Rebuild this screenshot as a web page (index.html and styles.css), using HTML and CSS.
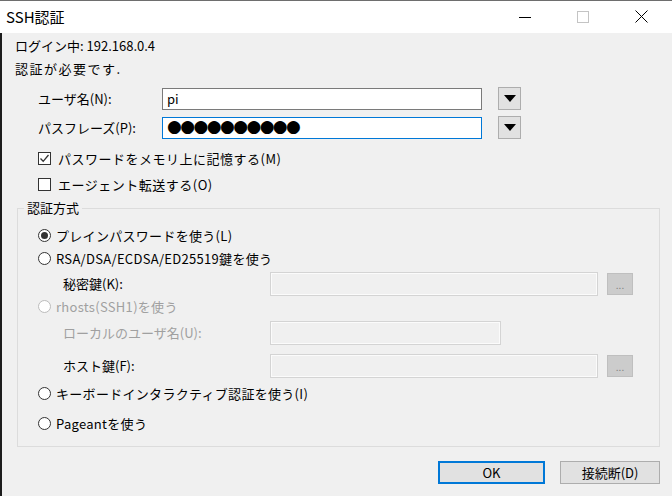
FILE: index.html
```html
<!DOCTYPE html>
<html lang="ja">
<head>
    <meta charset="UTF-8">
    <title>SSH認証</title>
    <link rel="stylesheet" href="styles.css">
</head>
<body>
    <div class="window">
        <div class="titlebar">
            <span class="title">SSH認証</span>
            <div class="caption">
                <span class="cap-btn"><svg width="12" height="12" viewBox="0 0 12 12"><path d="M0 6.5H12" stroke="#000" stroke-width="1"/></svg></span>
                <span class="cap-btn"><svg width="12" height="12" viewBox="0 0 12 12"><rect x="0.5" y="0.5" width="11" height="11" fill="none" stroke="#c4c4c4" stroke-width="1"/></svg></span>
                <span class="cap-btn"><svg width="13" height="13" viewBox="0 0 13 13"><path d="M0.5 0.5L12.5 12.5M12.5 0.5L0.5 12.5" stroke="#000" stroke-width="1"/></svg></span>
            </div>
        </div>

        <div class="client">
            <div class="info first">ログイン中: 192.168.0.4</div>
            <div class="info wide-text">認証が必要です.</div>

            <div class="field-row user">
                <label class="field-label">ユーザ名(N):</label>
                <div class="textbox">pi</div>
                <span class="drop"><svg width="12" height="7" viewBox="0 0 12 7"><path d="M0 0H12L6 7Z" fill="#000"/></svg></span>
            </div>
            <div class="field-row pass">
                <label class="field-label">パスフレーズ(P):</label>
                <div class="textbox focused"><span class="dots">●●●●●●●●●●</span></div>
                <span class="drop"><svg width="12" height="7" viewBox="0 0 12 7"><path d="M0 0H12L6 7Z" fill="#000"/></svg></span>
            </div>

            <div class="check-row first">
                <span class="checkbox"><svg width="11" height="11" viewBox="0 0 11 11"><path d="M1.5 5.5L4.2 8.3L9.5 2" fill="none" stroke="#333" stroke-width="1.3"/></svg></span>
                <span>パスワードをメモリ上に記憶する(M)</span>
            </div>
            <div class="check-row">
                <span class="checkbox"></span>
                <span>エージェント転送する(O)</span>
            </div>

            <fieldset class="auth">
                <legend>認証方式</legend>
                <div class="radio-row r1"><span class="radio checked"></span><span>プレインパスワードを使う(L)</span></div>
                <div class="radio-row r2"><span class="radio"></span><span>RSA/DSA/ECDSA/ED25519鍵を使う</span></div>
                <div class="sub-row key">
                    <span class="sub-label">秘密鍵(K):</span>
                    <div class="textbox disabled wide"></div>
                    <span class="browse">...</span>
                </div>
                <div class="radio-row r3 disabled"><span class="radio"></span><span>rhosts(SSH1)を使う</span></div>
                <div class="sub-row local disabled">
                    <span class="sub-label">ローカルのユーザ名(U):</span>
                    <div class="textbox disabled narrow"></div>
                </div>
                <div class="sub-row host">
                    <span class="sub-label">ホスト鍵(F):</span>
                    <div class="textbox disabled wide"></div>
                    <span class="browse">...</span>
                </div>
                <div class="radio-row r4"><span class="radio"></span><span>キーボードインタラクティブ認証を使う(I)</span></div>
                <div class="radio-row r5"><span class="radio"></span><span>Pageantを使う</span></div>
            </fieldset>

            <div class="buttons">
                <button class="btn default">OK</button>
                <button class="btn">接続断(D)</button>
            </div>
        </div>
    </div>
</body>
</html>
```

FILE: styles.css
```css
html, body {
    margin: 0;
    padding: 0;
}
body {
    width: 672px;
    height: 496px;
    overflow: hidden;
    font-family: 'Noto Sans CJK JP', 'Noto Sans', sans-serif;
    font-size: 13px;
    color: #000;
    background: #f0f0f0;
}
.window {
    width: 672px;
    height: 496px;
    display: flex;
    flex-direction: column;
}
.titlebar {
    height: 32px;
    border-top: 1px solid #6e6e6e;
    background: #fff;
    display: flex;
    align-items: center;
    justify-content: space-between;
}
.title {
    font-size: 15px;
    line-height: 20px;
    padding-left: 6px;
    margin-top: -1px;
}
.caption {
    display: flex;
    padding-right: 2px;
    height: 32px;
}
.cap-btn {
    width: 58px;
    display: flex;
    align-items: center;
    justify-content: center;
    margin-top: -1px;
}
.client {
    flex: 1;
    border-left: 2px solid #1c1c1c;
    background: #f0f0f0;
}
.info {
    height: 23px;
    line-height: 23px;
    padding-left: 13px;
}
.info.first {
    margin-top: 1px;
}
.info.wide-text {
    letter-spacing: 1.5px;
}
.field-row {
    display: flex;
    align-items: center;
    height: 23px;
    padding-left: 36px;
}
.field-row.user {
    margin-top: 7px;
}
.field-row.pass {
    margin-top: 6px;
}
.field-label {
    width: 124px;
    line-height: 18px;
}
.textbox {
    box-sizing: border-box;
    width: 320px;
    height: 22px;
    background: #fff;
    border: 1px solid #7a7a7a;
    line-height: 20px;
    padding-left: 4px;
    font-size: 13px;
}
.textbox.focused {
    border-color: #0078d7;
}
.dots {
    font-family: 'DejaVu Sans', sans-serif;
    font-size: 17px;
    letter-spacing: -1.6px;
    line-height: 19px;
    position: relative;
    top: -1px;
}
.drop {
    box-sizing: border-box;
    width: 23px;
    height: 23px;
    margin-left: 16px;
    background: #e1e1e1;
    border: 1px solid #adadad;
    display: flex;
    align-items: center;
    justify-content: center;
}
.check-row {
    display: flex;
    align-items: center;
    height: 24px;
    padding-left: 36px;
    margin-top: 2px;
    letter-spacing: 0.5px;
}
.check-row.first {
    margin-top: 7px;
}
.checkbox {
    box-sizing: border-box;
    width: 13px;
    height: 13px;
    border: 1px solid #333;
    background: #fff;
    margin-right: 7px;
    display: flex;
    align-items: center;
    justify-content: center;
}
.auth {
    margin: 3px 0 0 15px;
    padding: 7px 0 12px 0;
    width: 643px;
    box-sizing: border-box;
    border: 1px solid #dcdcdc;
    min-inline-size: 0;
}
.auth legend {
    margin-left: 6px;
    padding: 0 3px;
    line-height: 18px;
}
.radio-row {
    display: flex;
    align-items: center;
    height: 23px;
    padding-left: 20px;
    letter-spacing: 0.3px;
}
.radio {
    box-sizing: border-box;
    width: 13px;
    height: 13px;
    border: 1px solid #333;
    border-radius: 50%;
    background: #fff;
    margin-right: 5px;
    display: flex;
    align-items: center;
    justify-content: center;
}
.radio.checked::after {
    content: '';
    width: 7px;
    height: 7px;
    border-radius: 50%;
    background: #333;
}
.radio-row.disabled {
    color: #a0a0a0;
}
.radio-row.disabled .radio {
    border-color: #bcbcbc;
}
.radio-row.r3 {
    height: 20px;
}
.radio-row.r4 {
    height: 22px;
    margin-top: 4px;
}
.radio-row.r5 {
    height: 22px;
    margin-top: 8px;
}
.sub-row {
    display: flex;
    align-items: center;
    height: 24px;
    padding-left: 45px;
}
.sub-row.key {
    margin-top: 2px;
}
.sub-row.local {
    margin-top: 5px;
}
.sub-row.host {
    margin-top: 9px;
}
.sub-row.disabled {
    color: #a0a0a0;
}
.sub-label {
    width: 207px;
    line-height: 18px;
}
.textbox.disabled {
    height: 24px;
    background: #f0f0f0;
    border: 1px solid #d4d4d4;
    box-shadow: inset 0 0 0 1px #fbfbfb;
}
.textbox.wide {
    width: 328px;
}
.textbox.narrow {
    width: 231px;
}
.browse {
    box-sizing: border-box;
    width: 26px;
    height: 22px;
    margin-left: 9px;
    background: #cccccc;
    border: 1px solid #bfbfbf;
    color: #838383;
    font-size: 10px;
    line-height: 22px;
    text-align: center;
}
.buttons {
    display: flex;
    justify-content: flex-end;
    gap: 15px;
    padding-right: 12px;
    margin-top: 14px;
}
.btn {
    box-sizing: border-box;
    height: 23px;
    width: 100px;
    background: #e1e1e1;
    border: 1px solid #adadad;
    font-family: 'Noto Sans CJK JP', 'Noto Sans', sans-serif;
    font-size: 13px;
    line-height: 19px;
    padding: 0;
    color: #000;
}
.btn.default {
    width: 107px;
    border: 2px solid #0078d7;
}
```
